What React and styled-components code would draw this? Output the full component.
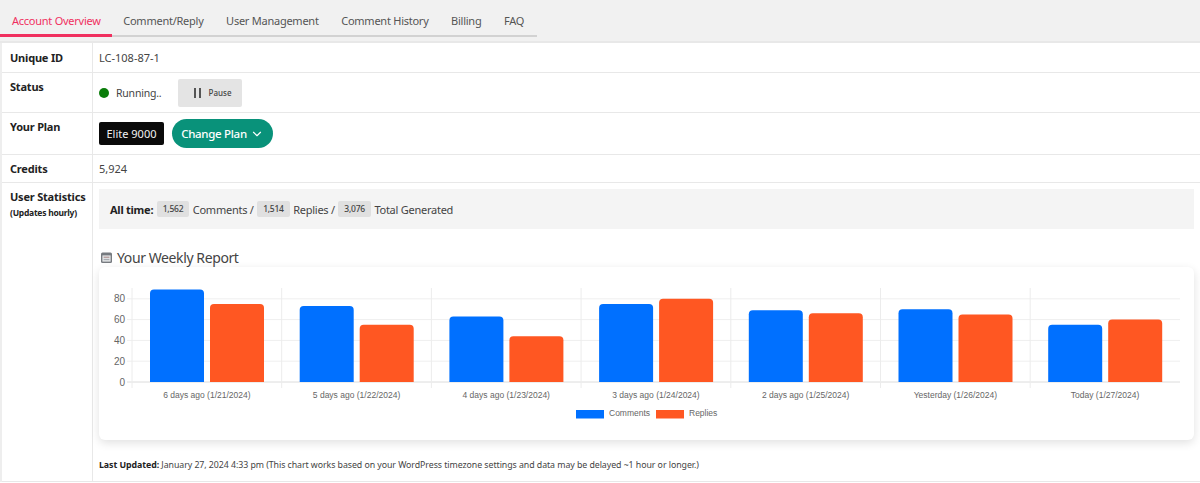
import styled, { createGlobalStyle } from "styled-components";
import { ChevronDown } from "lucide-react";

const tabs = ["Account Overview", "Comment/Reply", "User Management", "Comment History", "Billing", "FAQ"];

const report = [
  { label: "6 days ago (1/21/2024)", comments: 89, replies: 75 },
  { label: "5 days ago (1/22/2024)", comments: 73, replies: 55 },
  { label: "4 days ago (1/23/2024)", comments: 63, replies: 44 },
  { label: "3 days ago (1/24/2024)", comments: 75, replies: 80 },
  { label: "2 days ago (1/25/2024)", comments: 69, replies: 66 },
  { label: "Yesterday (1/26/2024)", comments: 70, replies: 65 },
  { label: "Today (1/27/2024)", comments: 55, replies: 60 }
];

const BLUE = "#0070ff";
const ORANGE = "#ff5722";
const BASE = 115;
const UNIT = 1.04;
const LEFT = 33;
const GROUP = 149.7;

const barPath = (x, value) => {
  const top = BASE - value * UNIT;
  return `M${x} ${BASE}V${top + 4}Q${x} ${top} ${x + 4} ${top}H${x + 50}Q${x + 54} ${top} ${x + 54} ${top + 4}V${BASE}Z`;
};

function WeeklyChart() {
  return (
    <ChartSvg viewBox="0 0 1095 173" width="1095" height="173">
      {[0, 20, 40, 60, 80].map((tick) => {
        const y = BASE - tick * UNIT;
        return (
          <g key={tick}>
            <line x1="28" x2="1081" y1={y} y2={y} stroke={tick === 0 ? "#dcdcdc" : "#efefef"} />
            <text x="26" y={y + 3.5} textAnchor="end" fontSize="10" fill="#666">
              {tick}
            </text>
          </g>
        );
      })}
      {report.map((day, i) => {
        const x = LEFT + i * GROUP;
        return (
          <g key={day.label}>
            <line x1={x} x2={x} y1="21" y2="121" stroke="#ececec" />
            <path d={barPath(x + 18, day.comments)} fill={BLUE} />
            <path d={barPath(x + 78, day.replies)} fill={ORANGE} />
            <text x={x + GROUP / 2} y="131" textAnchor="middle" fontSize="8.5" fill="#666">
              {day.label}
            </text>
          </g>
        );
      })}
      <rect x="477" y="143" width="28" height="8.5" fill={BLUE} />
      <text x="510" y="149" fontSize="8.5" fill="#666">
        Comments
      </text>
      <rect x="557" y="143" width="28" height="8.5" fill={ORANGE} />
      <text x="590" y="149" fontSize="8.5" fill="#666">
        Replies
      </text>
    </ChartSvg>
  );
}

export default function App() {
  return (
    <>
      <GlobalStyle />
      <TabBar>
        <TabList>
          {tabs.map((tab, i) => (
            <Tab key={tab} $active={i === 0}>
              {tab}
            </Tab>
          ))}
        </TabList>
      </TabBar>
      <Table>
        <Row $height={29}>
          <Label>Unique ID</Label>
          <Value>LC-108-87-1</Value>
        </Row>
        <Row $height={39}>
          <Label $top={6}>Status</Label>
          <Value>
            <StatusDot />
            <RunningText>Running..</RunningText>
            <PauseButton>
              <PauseBars />
              Pause
            </PauseButton>
          </Value>
        </Row>
        <Row $height={41}>
          <Label $top={6}>Your Plan</Label>
          <Value>
            <PlanBadge>Elite 9000</PlanBadge>
            <ChangeButton>
              Change Plan
              <ChevronDown size={14} strokeWidth={2} />
            </ChangeButton>
          </Value>
        </Row>
        <Row $height={27}>
          <Label>Credits</Label>
          <Value>5,924</Value>
        </Row>
        <Row $height={298}>
          <Label $top={6}>
            User Statistics
            <SubLabel>(Updates hourly)</SubLabel>
          </Label>
          <StatsCell>
            <AllTime>
              <strong>All time:</strong>
              <Count>1,562</Count>
              Comments /<Count>1,514</Count>
              Replies /<Count>3,076</Count>
              Total Generated
            </AllTime>
            <ReportTitle>
              <CalendarIcon viewBox="0 0 11 11" width="11" height="11">
                <rect x="0" y="0.5" width="11" height="10.5" rx="1.5" fill="#777b80" />
                <rect x="1.4" y="3.4" width="8.2" height="6.2" fill="#e4e6e8" />
                <rect x="2.6" y="4.6" width="5.8" height="1.3" fill="#b59c9c" />
                <rect x="2.6" y="6.9" width="5.8" height="1.3" fill="#a9adb2" />
              </CalendarIcon>
              Your Weekly Report
            </ReportTitle>
            <ChartCard>
              <WeeklyChart />
            </ChartCard>
            <UpdatedNote>
              <strong>Last Updated:</strong> January 27, 2024 4:33 pm (This chart works based on your WordPress
              timezone settings and data may be delayed ~1 hour or longer.)
            </UpdatedNote>
          </StatsCell>
        </Row>
      </Table>
    </>
  );
}

const GlobalStyle = createGlobalStyle`
  * {
    box-sizing: border-box;
  }
  body {
    margin: 0;
    background: #ffffff;
    color: #444;
    font-family: "Noto Sans", "Open Sans", sans-serif;
    font-size: 11px;
  }
`;
const TabBar = styled.div`
  height: 43px;
  padding-top: 8px;
  background: #f1f1f1;
  border-bottom: 2px solid #e8e8e8;
`;
const TabList = styled.div`
  display: flex;
  width: 537px;
  height: 29px;
  border-bottom: 2px solid #d2d2d2;
`;
const Tab = styled.div`
  height: 29px;
  padding: 5px 11.3px 0 11.3px;
  font-size: 11px;
  line-height: 16px;
  letter-spacing: -0.25px;
  white-space: nowrap;
  color: ${(props) => (props.$active ? "#f0305f" : "#555")};
  border-bottom: 3px solid ${(props) => (props.$active ? "#f0305f" : "transparent")};
  &:first-child {
    padding-left: 12px;
  }
`;
const Table = styled.div`
  display: flex;
  flex-direction: column;
  border-left: 2px solid #eeeeee;
`;
const Row = styled.div`
  display: grid;
  grid-template-columns: 91px 1fr;
  min-height: ${(props) => props.$height + 1}px;
  border-bottom: 1px solid #e8e8e8;
`;
const Label = styled.div`
  padding: ${(props) => props.$top || 0}px 0 0 8px;
  display: ${(props) => (props.$top ? "block" : "flex")};
  align-items: center;
  font-weight: 700;
  font-size: 11px;
  line-height: 16px;
  letter-spacing: -0.2px;
  color: #222;
  border-right: 1px solid #e8e8e8;
`;
const SubLabel = styled.div`
  margin-top: 2px;
  font-size: 8.5px;
  line-height: 12px;
  letter-spacing: -0.25px;
`;
const Value = styled.div`
  display: flex;
  align-items: center;
  padding-left: 6px;
  font-size: 11px;
`;
const StatusDot = styled.span`
  width: 10px;
  height: 10px;
  border-radius: 50%;
  background: #0a7d0a;
`;
const RunningText = styled.span`
  width: 46px;
  margin-left: 7px;
  font-size: 10.5px;
  letter-spacing: -0.2px;
`;
const PauseButton = styled.div`
  display: flex;
  align-items: center;
  justify-content: center;
  gap: 8px;
  width: 64px;
  height: 28px;
  margin-left: 16px;
  padding-left: 5px;
  background: #e4e4e4;
  border-radius: 2px;
  font-size: 8px;
  font-weight: 500;
`;
const PauseBars = styled.span`
  width: 7px;
  height: 10px;
  border-left: 2px solid #555;
  border-right: 2px solid #555;
`;
const PlanBadge = styled.div`
  display: flex;
  align-items: center;
  justify-content: center;
  width: 65px;
  height: 23px;
  background: #0a0a0a;
  border-radius: 2px;
  color: #f2f2f2;
  font-size: 11px;
`;
const ChangeButton = styled.div`
  display: flex;
  align-items: center;
  justify-content: center;
  gap: 3px;
  width: 101px;
  height: 29px;
  margin-left: 8px;
  background: #09927a;
  border-radius: 15px;
  color: #fff;
  font-size: 11.5px;
  font-weight: 500;
  letter-spacing: -0.3px;
`;
const StatsCell = styled.div`
  padding: 6px 6px 0 6px;
  min-width: 0;
`;
const AllTime = styled.div`
  display: flex;
  align-items: center;
  height: 40px;
  padding-left: 11px;
  background: #f4f4f4;
  font-size: 11px;
  letter-spacing: -0.25px;
  white-space: pre;
  strong {
    color: #222;
  }
`;
const Count = styled.span`
  margin: 0 3.5px 0 3.5px;
  padding: 0 6px;
  height: 16px;
  line-height: 16px;
  background: #e0e0e0;
  border-radius: 2px;
  font-size: 8.5px;
  font-weight: 500;
`;
const ReportTitle = styled.div`
  display: flex;
  align-items: center;
  gap: 5px;
  height: 16px;
  margin-top: 20px;
  padding-left: 2px;
  font-size: 14px;
  letter-spacing: -0.4px;
`;
const CalendarIcon = styled.svg`
  flex: none;
`;
const ChartCard = styled.div`
  width: 1095px;
  height: 173px;
  margin-top: 2px;
  background: #fff;
  border-radius: 6px;
  box-shadow: 0 3px 10px rgba(0, 0, 0, 0.12);
`;
const ChartSvg = styled.svg`
  display: block;
  font-family: "Liberation Sans", Arial, sans-serif;
`;
const UpdatedNote = styled.div`
  margin-top: 19px;
  font-size: 8.8px;
  line-height: 13px;
  letter-spacing: -0.06px;
  white-space: nowrap;
  strong {
    color: #222;
  }
`;
